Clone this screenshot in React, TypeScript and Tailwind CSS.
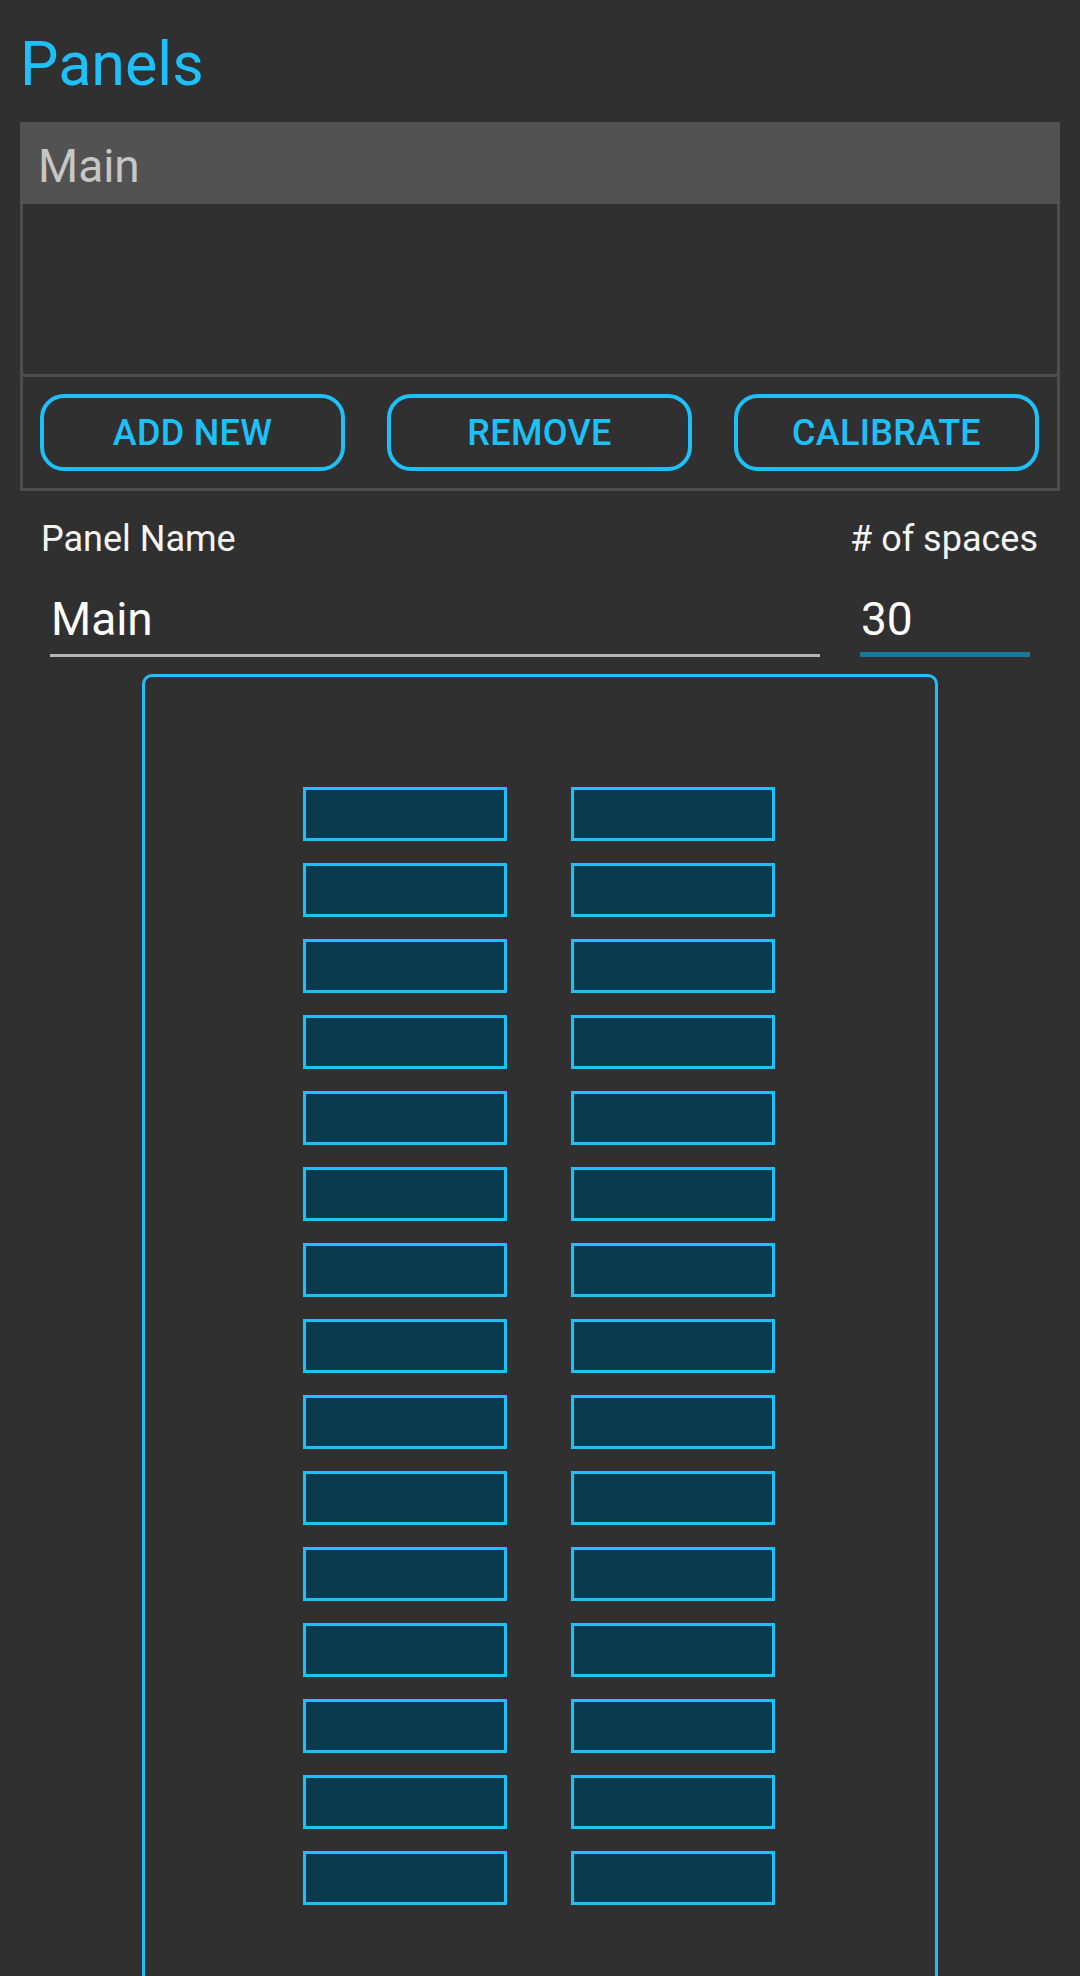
import React from "react";

const FONT = { fontFamily: "Roboto, 'Noto Sans', 'Liberation Sans', sans-serif" };

function Slot() {
  return <div className="w-[204px] h-[54px] border-[3px] border-[#1ec0fa] bg-[#0a3a4e]" />;
}

export default function App() {
  const rows = Array.from({ length: 15 });
  return (
    <div style={FONT} className="w-[1080px] h-[1976px] overflow-hidden bg-[#303030] px-[20px]">
      <div className="pt-[34px] h-[122px]">
        <div className="text-[61px] leading-none text-[#1ec0fa]">Panels</div>
      </div>

      <div className="w-[1040px]">
        <div className="h-[82px] bg-[#525252] pl-[18px] pt-[21px]">
          <div className="text-[46px] leading-none text-[#c6c6c6]">Main</div>
        </div>
        <div className="border-x-[3px] border-b-[3px] border-[#4d4d4d]">
          <div className="h-[170px]" />
          <div className="h-[3px] bg-[#4d4d4d]" />
          <div className="flex justify-between pl-[17px] pr-[18px] py-[17px]">
            {["ADD NEW", "REMOVE", "CALIBRATE"].map((t) => (
              <div
                key={t}
                className="w-[305px] h-[77px] rounded-[24px] border-[4px] border-[#1ec0fa] flex items-center justify-center text-[36px] font-medium text-[#1ec0fa] tracking-[0.3px]"
              >
                {t}
              </div>
            ))}
          </div>
        </div>
      </div>

      <div className="flex justify-between pl-[21px] pr-[22px] pt-[30px]">
        <div className="text-[36px] leading-none text-[#f5f5f5]">Panel Name</div>
        <div className="text-[36px] leading-none text-[#f5f5f5]">
          # of spaces
        </div>
      </div>

      <div className="flex pl-[30px] pt-[39px]">
        <div className="w-[770px] border-b-[3px] border-[#b5b5b5] pb-[10px] pl-[1px]">
          <div className="text-[46px] leading-none text-white">Main</div>
        </div>
        <div className="ml-[40px] w-[170px] border-b-[5px] border-[#17789e] pb-[10px] pl-[1px]">
          <div className="text-[46px] leading-none text-white">30</div>
        </div>
      </div>

      <div className="mt-[17px] mx-auto w-[796px] h-[1400px] rounded-[10px] border-[3px] border-[#1ec0fa] pt-[110px]">
        <div className="flex flex-col items-center gap-[22px]">
          {rows.map((_, i) => (
            <div key={i} className="flex gap-[64px] pr-[3px]">
              <Slot />
              <Slot />
            </div>
          ))}
        </div>
      </div>
    </div>
  );
}
